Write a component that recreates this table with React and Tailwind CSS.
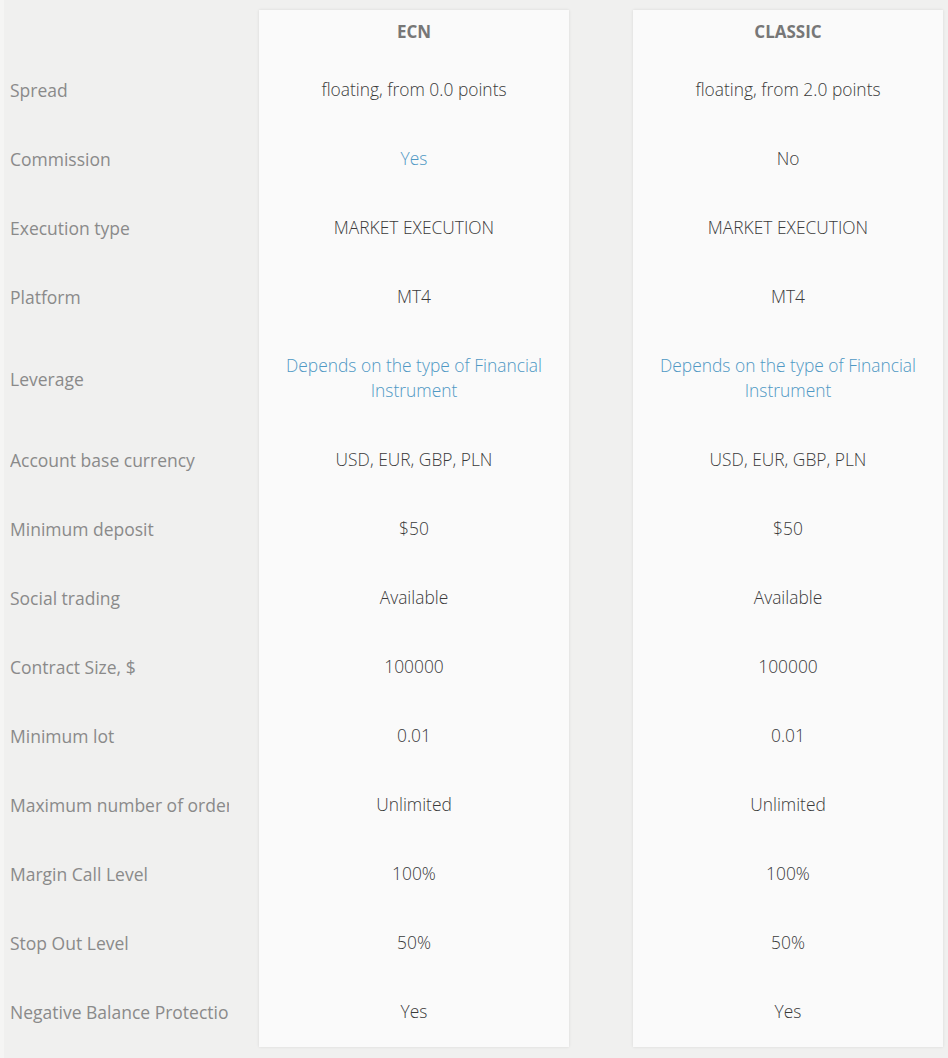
import React from "react";

const rows = [
  { label: "Spread", ecn: "floating, from 0.0 points", classic: "floating, from 2.0 points" },
  { label: "Commission", ecn: "Yes", classic: "No", ecnBlue: true },
  { label: "Execution type", ecn: "MARKET EXECUTION", classic: "MARKET EXECUTION" },
  { label: "Platform", ecn: "MT4", classic: "MT4" },
  { label: "Leverage", ecn: "Depends on the type of Financial Instrument", classic: "Depends on the type of Financial Instrument", ecnBlue: true, classicBlue: true, tall: true },
  { label: "Account base currency", ecn: "USD, EUR, GBP, PLN", classic: "USD, EUR, GBP, PLN" },
  { label: "Minimum deposit", ecn: "$50", classic: "$50" },
  { label: "Social trading", ecn: "Available", classic: "Available" },
  { label: "Contract Size, $", ecn: "100000", classic: "100000" },
  { label: "Minimum lot", ecn: "0.01", classic: "0.01" },
  { label: "Maximum number of orders", ecn: "Unlimited", classic: "Unlimited" },
  { label: "Margin Call Level", ecn: "100%", classic: "100%" },
  { label: "Stop Out Level", ecn: "50%", classic: "50%" },
  { label: "Negative Balance Protection", ecn: "Yes", classic: "Yes" },
];

function Card({ title, keyName, blueKey }) {
  return (
    <div className="mt-[10px] w-[310px] bg-[#fafafa] shadow-[0_0_3px_rgba(0,0,0,0.10)] self-start">
      <div className="h-[46px] pt-[9px] text-center text-[17px] leading-[25px] font-bold text-[#777777]">
        {title}
      </div>
      {rows.map((r, i) => (
        <div
          key={i}
          className={`${r.tall ? "h-[94px]" : "h-[69px]"} flex items-center justify-center px-5 pb-[2px] text-center text-[17.4px] leading-[25px] font-light ${r[blueKey] ? "text-[#4f98c4]" : "text-[#3a3a3a]"}`}
        >
          <span>{r[keyName]}</span>
        </div>
      ))}
    </div>
  );
}

export default function App() {
  return (
    <div
      className="w-[948px] h-[1058px] bg-[#f0f0ef] flex overflow-hidden"
      style={{ fontFamily: '"Open Sans", sans-serif' }}
    >
      <div className="w-[4px] bg-[#f5f5f4]" />
      <div className="w-[255px] pt-[56px]">
        {rows.map((r, i) => (
          <div
            key={i}
            className={`${r.tall ? "h-[94px]" : "h-[69px]"} flex items-center pl-[6px]`}
          >
            <div className="w-[219px] overflow-hidden whitespace-nowrap text-[17.5px] leading-[25px] text-[#8a8a8a]">
              {r.label}
            </div>
          </div>
        ))}
      </div>
      <Card title="ECN" keyName="ecn" blueKey="ecnBlue" />
      <div className="w-[64px]" />
      <Card title="CLASSIC" keyName="classic" blueKey="classicBlue" />
    </div>
  );
}
